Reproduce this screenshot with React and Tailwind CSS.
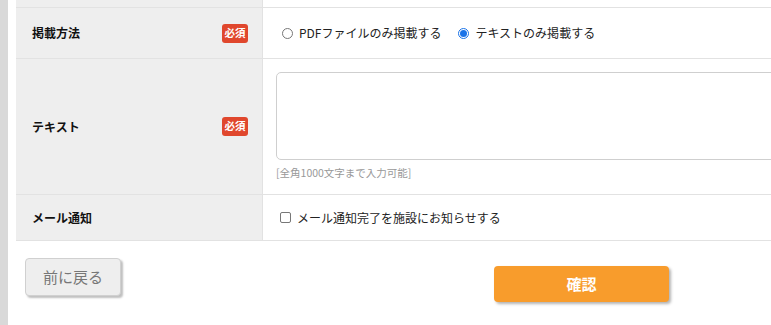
export default function App() {
  const font = { fontFamily: '"Noto Sans CJK JP", "Noto Sans", sans-serif' };
  const Badge = () => (
    <span className="inline-flex items-center justify-center w-[26px] h-[19px] rounded-[3px] bg-[#e0472d] text-white text-[10.5px] font-bold leading-none">必須</span>
  );
  return (
    <div className="w-[771px] h-[325px] overflow-hidden bg-white flex" style={font}>
      <div className="w-[8px] shrink-0 bg-[#d9d9d9]" />
      <div className="flex-1 pl-[8px] min-w-0">
        <div className="w-[900px]">
          <div className="flex h-[8px] border-b border-[#e2e2e2]">
            <div className="w-[247px] shrink-0 bg-[#eeeeee] border-r border-[#e2e2e2]" />
            <div className="flex-1" />
          </div>
          <div className="flex h-[51px] border-b border-[#e2e2e2]">
            <div className="w-[247px] shrink-0 bg-[#eeeeee] border-r border-[#e2e2e2] flex items-center justify-between pl-[16px] pr-[14px]">
              <span className="text-[12px] font-bold text-[#111]">掲載方法</span>
              <Badge />
            </div>
            <div className="flex-1 flex items-center pl-[19px] text-[12px] text-[#222]">
              <span className="w-[11px] h-[11px] rounded-full border border-[#777] bg-white mr-[6px]" />
              <span>PDFファイルのみ掲載する</span>
              <span className="w-[11px] h-[11px] rounded-full border border-[#1a73e8] bg-white mr-[6px] ml-[17px] flex items-center justify-center">
                <span className="w-[7px] h-[7px] rounded-full bg-[#1a73e8]" />
              </span>
              <span>テキストのみ掲載する</span>
            </div>
          </div>
          <div className="flex h-[136px] border-b border-[#e2e2e2]">
            <div className="w-[247px] shrink-0 bg-[#eeeeee] border-r border-[#e2e2e2] flex items-center justify-between pl-[16px] pr-[14px]">
              <span className="text-[12px] font-bold text-[#111]">テキスト</span>
              <Badge />
            </div>
            <div className="flex-1 pl-[13px] pt-[13px]">
              <div className="h-[88px] border border-[#cfcfcf] rounded-[5px] bg-white" />
              <div className="mt-[5px] text-[10.5px] text-[#999]">[全角1000文字まで入力可能]</div>
            </div>
          </div>
          <div className="flex h-[46px] border-b border-[#e2e2e2]">
            <div className="w-[247px] shrink-0 bg-[#eeeeee] border-r border-[#e2e2e2] flex items-center pl-[16px]">
              <span className="text-[12px] font-bold text-[#111]">メール通知</span>
            </div>
            <div className="flex-1 flex items-center pl-[17px] text-[12px] text-[#222]">
              <span className="w-[11px] h-[11px] rounded-[2px] border border-[#777] bg-white mr-[6px]" />
              <span>メール通知完了を施設にお知らせする</span>
            </div>
          </div>
          <div className="flex items-start pt-[17px]">
            <button className="ml-[9px] w-[96px] h-[38px] rounded-[4px] border border-[#d0d0d0] bg-[#eeeeee] text-[#777] text-[15px] shadow-[2px_2px_2px_rgba(0,0,0,0.25)]">前に戻る</button>
            <button className="ml-[373px] mt-[8px] w-[175px] h-[36px] rounded-[4px] bg-[#f89c2c] text-white text-[15px] font-bold shadow-[2px_2px_3px_rgba(0,0,0,0.3)]">確認</button>
          </div>
        </div>
      </div>
    </div>
  );
}
